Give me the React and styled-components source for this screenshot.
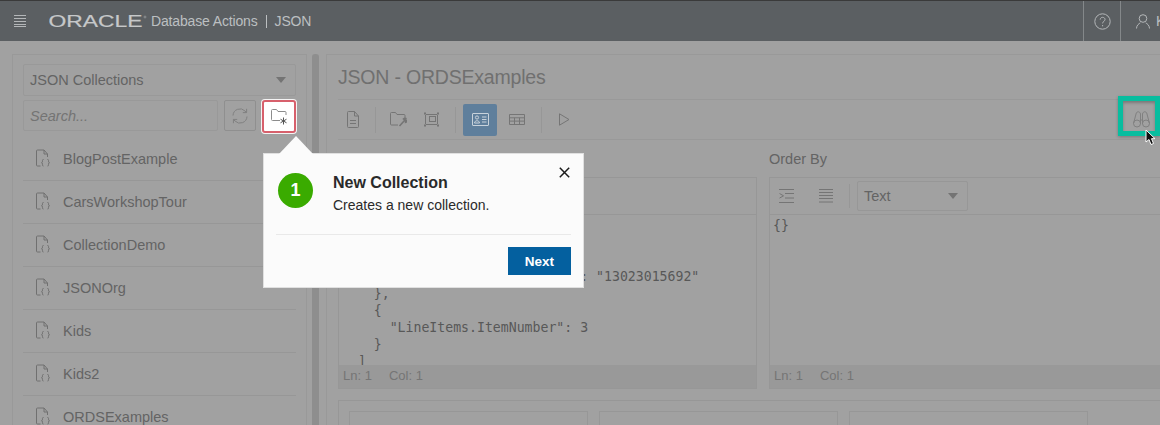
import React from "react";
import styled, { createGlobalStyle } from "styled-components";

const GlobalStyle = createGlobalStyle`
    html, body { margin: 0; padding: 0; background: #a1a1a1; }
    * { box-sizing: border-box; }
`;

const collections = ["BlogPostExample", "CarsWorkshopTour", "CollectionDemo", "JSONOrg", "Kids", "Kids2", "ORDSExamples"];

const codeLines = [
    "{",
    '  "$orderby": [',
    "    {",
    '      "LineItems.Part.UPCCode": "13023015692"',
    "    },",
    "    {",
    '      "LineItems.ItemNumber": 3',
    "    }",
    "  ]",
    "}",
];

const Svg = ({ size = 20, h, stroke = "#757575", children }) => (
    <svg width={size} height={h || size} viewBox={`0 0 ${size} ${h || size}`} fill="none" stroke={stroke} strokeWidth="1" style={{ flex: "none" }}>
        {children}
    </svg>
);

const HamburgerIcon = () => (
    <Svg size={12} stroke="#b4b7b9">
        <path d="M0 .5h12M0 3.5h12M0 6.5h12M0 9.5h12M0 11.5h12" />
    </Svg>
);

const HelpIcon = () => (
    <Svg size={17} stroke="#b4b7b9">
        <circle cx="8.5" cy="8.5" r="7.7" />
        <path d="M6.2 6.6c0-3 4.8-3 4.8-.1 0 1.8-2.4 1.9-2.4 3.9M8.6 12v1.3" />
    </Svg>
);

const UserIcon = () => (
    <Svg size={14} h={15} stroke="#b4b7b9">
        <circle cx="7" cy="4.5" r="3.8" />
        <path d="M.5 14.5c0-3.2 2.5-5 3.8-5.6M13.5 14.5c0-3.2-2.5-5-3.8-5.6" />
    </Svg>
);

const DocJsonIcon = () => (
    <Svg size={15} h={18} stroke="#707070">
        <path d="M4.5 17H1.5a1 1 0 0 1-1-1V2a1 1 0 0 1 1-1h6.500l3.500 4v3M8 1v4h3.500" />
        <path d="M7.500 10.500c-1.300 0-1 .8-1 1.700s-.2 1.300-1 1.500c.8.2 1 .6 1 1.500s-.3 1.800 1 1.800M11.500 10.500c1.300 0 1 .8 1 1.700s.2 1.300 1 1.500c-.8.2-1 .6-1 1.500s.3 1.800-1 1.800" />
    </Svg>
);

const RefreshIcon = () => (
    <Svg size={16} stroke="#808080">
        <path d="M1 7.5A7 7 0 0 1 13 3l1.5 1.5M15 8.5A7 7 0 0 1 3 13l-1.5-1.5" />
        <path d="M14.6.8v3.8h-3.8M1.4 15.2v-3.8h3.8" />
    </Svg>
);

const NewFolderIcon = () => (
    <Svg size={17} h={16} stroke="#8c8c8c">
        <path d="M9 11.5H1.5a1 1 0 0 1-1-1V1.5a1 1 0 0 1 1-1h4l1.5 2h7a1 1 0 0 1 1 1V6" />
        <path stroke="#555" d="M12.5 8.5v7M9.5 10.2l6 3.6M15.5 10.2l-6 3.6" />
    </Svg>
);

const FileIcon = () => (
    <Svg size={12} h={17}>
        <path d="M.5 1.5a1 1 0 0 1 1-1H7.5l4 4.5v10.5a1 1 0 0 1-1 1h-9a1 1 0 0 1-1-1zM7.5.5V5h4M3 9.5h6M3 12.5h6" />
    </Svg>
);

const FolderWrenchIcon = () => (
    <Svg size={17} h={15}>
        <path d="M8 13H1.5a1 1 0 0 1-1-1V1.5a1 1 0 0 1 1-1h4l1.5 2h7a1 1 0 0 1 1 1V6" />
        <path strokeWidth="1.6" d="M9.5 14l5-5.5M13 7.5c.6-1 1.6-1.3 2.7-1l-1 1.5 1 1 1.3-.8c.2 1.200-.8 2.300-2.200 2.200" />
    </Svg>
);

const SelectionIcon = () => (
    <Svg size={17} h={15}>
        <path d="M3 2.500h11M2.500 3v9M3 12.500h11M14.500 3v9" />
        <rect x="6.500" y="4.500" width="6" height="5" />
        <path strokeWidth="2" d="M1 1.500h2M14 1.500h2M1 13.500h2M14 13.500h2" />
    </Svg>
);

const CardIcon = () => (
    <Svg size={17} h={13} stroke="#c8d2db">
        <rect x=".5" y=".5" width="16" height="12" rx=".5" />
        <circle cx="5" cy="4.500" r="1.600" />
        <path d="M2.500 10c0-3 5-3 5 0zM10 4h4.500M10 6.500h4.500M10 9h4.500" />
    </Svg>
);

const TableIcon = () => (
    <Svg size={16} h={11}>
        <path d="M.5.5h15v10H.5zM.5 3.800h15M.5 7.100h15M5.500 3.800v6.700M10.500 3.800v6.700" />
    </Svg>
);

const PlayIcon = () => (
    <Svg size={11} h={13}>
        <path d="M.5.8v11.400L10 6.500z" />
    </Svg>
);

const BinocularsIcon = () => (
    <Svg size={17} h={17} stroke="#808080">
        <circle cx="4" cy="12.500" r="3.500" />
        <circle cx="13" cy="12.500" r="3.500" />
        <path d="M.5 12.500L3 3c.5-3 4-3 4.500 0v10M16.500 12.500L14 3c-.5-3-4-3-4.500 0v10M7.500 9h2" />
    </Svg>
);

const IndentIcon = () => (
    <Svg size={15} h={14}>
        <path d="M0 .5h15M6 4.500h9M6 9h9M0 13.500h15M.5 4.500l4 2.300-4 2.300" />
    </Svg>
);

const LinesIcon = () => (
    <Svg size={14} h={14}>
        <path d="M0 .5h14M0 3.500h14M0 6.500h14M0 9.500h14M0 13h14" />
    </Svg>
);

const CloseIcon = () => (
    <Svg size={11} stroke="#1b1b1b">
        <path strokeWidth="1.500" d="M.8.8l9.400 9.400M10.200.8L.8 10.200" />
    </Svg>
);

const CursorIcon = () => (
    <svg width="12" height="17" viewBox="0 0 12 17">
        <path d="M1 1v12l3-2.500 2 5 2.500-1-2-4.800H10z" fill="#111" stroke="#fff" strokeWidth="1" />
    </svg>
);

const JsonEditor = ({ label, lines }) => (
    <EditorColumn>
        <EditorLabel>{label}</EditorLabel>
        <EditorBox>
            <EditorToolbar>
                <EditorTool><IndentIcon /></EditorTool>
                <EditorTool><LinesIcon /></EditorTool>
                <ToolSeparator $height={24} />
                <ModeSelect>
                    Text
                    <Caret />
                </ModeSelect>
            </EditorToolbar>
            <Code>{lines.join("\n")}</Code>
            <EditorFooter>
                <span>Ln: 1</span>
                <span>Col: 1</span>
            </EditorFooter>
        </EditorBox>
    </EditorColumn>
);

const App = () => {
    return (
        <Page>
            <GlobalStyle />
            <Header>
                <MenuButton><HamburgerIcon /></MenuButton>
                <Logo>
                    <svg width="98" height="14" viewBox="0 0 98 14">
                        <text x="-0.500" y="13" textLength="94" lengthAdjust="spacingAndGlyphs" fontFamily="Liberation Sans" fontSize="16.500" fill="#c6c8c9" stroke="#c6c8c9" strokeWidth=".2">ORACLE</text>
                        <circle cx="96" cy="3" r="1" fill="none" stroke="#c6c8c9" strokeWidth=".4" />
                    </svg>
                </Logo>
                <AppTitle>Database Actions</AppTitle>
                <TitleBar />
                <AppTitle>JSON</AppTitle>
                <HeaderCell $width={37}><HelpIcon /></HeaderCell>
                <HeaderCell $width={40} $user>
                    <UserIcon />
                    <UserName>K</UserName>
                </HeaderCell>
            </Header>

            <Content>
                <Sidebar>
                    <SelectBox>
                        JSON Collections
                        <Caret />
                    </SelectBox>
                    <SearchRow>
                        <SearchInput>Search...</SearchInput>
                        <SquareButton><RefreshIcon /></SquareButton>
                        <NewButton><NewFolderIcon /></NewButton>
                    </SearchRow>
                    <CollectionList>
                        {collections.map((name) => (
                            <CollectionRow key={name}>
                                <DocJsonIcon />
                                {name}
                            </CollectionRow>
                        ))}
                    </CollectionList>
                </Sidebar>

                <Splitter />

                <Main>
                    <Title>JSON - ORDSExamples</Title>
                    <Toolbar>
                        <ToolButton $width={30}><FileIcon /></ToolButton>
                        <ToolSeparator $height={26} $gap={7} />
                        <ToolButton $width={31}><FolderWrenchIcon /></ToolButton>
                        <ToolButton $width={34}><SelectionIcon /></ToolButton>
                        <ToolSeparator $height={26} $gap={7} />
                        <ToolButton $width={34} $active><CardIcon /></ToolButton>
                        <ToolButton $width={40}><TableIcon /></ToolButton>
                        <ToolSeparator $height={26} $gap={4} />
                        <ToolButton $width={36}><PlayIcon /></ToolButton>
                        <FindButton>
                            <BinocularsIcon />
                        </FindButton>
                    </Toolbar>
                    <Editors>
                        <JsonEditor label="Filter" lines={codeLines} />
                        <JsonEditor label="Order By" lines={["{}"]} />
                    </Editors>
                    <LowerPanel>
                        <LowerBox />
                        <LowerBox />
                        <LowerBox />
                    </LowerPanel>
                </Main>
            </Content>

            <Highlight />
            <Pointer><CursorIcon /></Pointer>

            <Popover>
                <PopoverArrow />
                <PopoverBody>
                    <StepBadge>1</StepBadge>
                    <PopoverText>
                        <PopoverTitle>New Collection</PopoverTitle>
                        <PopoverDescription>Creates a new collection.</PopoverDescription>
                    </PopoverText>
                    <CloseButton><CloseIcon /></CloseButton>
                </PopoverBody>
                <PopoverFooter>
                    <NextButton>Next</NextButton>
                </PopoverFooter>
            </Popover>
        </Page>
    );
};

export default App;

const Page = styled.div`
    position: relative;
    width: 1160px;
    height: 425px;
    overflow: hidden;
    background: #a1a1a1;
    color: #646464;
    font-family: "Liberation Sans", Arial, sans-serif;
    font-size: 14.5px;
`;

const Header = styled.header`
    display: flex;
    align-items: center;
    height: 41px;
    background: #5b5f62;
    border-top: 1px solid #3a3a3a;
    color: #bcbfc1;
`;

const MenuButton = styled.div`
    display: flex;
    width: 49px;
    padding-left: 14px;
`;

const Logo = styled.div`
    display: flex;
    width: 102px;
`;

const AppTitle = styled.span`
    font-size: 14px;
    letter-spacing: -0.15px;
`;

const TitleBar = styled.i`
    width: 1px;
    height: 13px;
    margin: 0 8px;
    background: #bcbfc1;
`;

const HeaderCell = styled.div`
    display: flex;
    align-items: center;
    justify-content: ${(p) => (p.$user ? "flex-start" : "center")};
    flex: none;
    width: ${(p) => p.$width}px;
    height: 40px;
    padding-left: ${(p) => (p.$user ? "15px" : "0")};
    gap: 6px;
    border-left: 1px solid #84888a;

    &:nth-last-child(2) {
        margin-left: auto;
    }
`;

const UserName = styled.span`
    font-size: 14px;
`;

const Content = styled.div`
    display: flex;
    height: 384px;
    padding: 13px 0 0 12px;
`;

const Sidebar = styled.aside`
    flex: none;
    width: 295px;
    padding: 9px 10px 0;
    border: 1px solid #999;
    border-bottom: 0;
`;

const Caret = styled.i`
    width: 0;
    height: 0;
    margin-left: auto;
    border-style: solid;
    border-width: 6px 5px 0;
    border-color: #747474 transparent transparent;
`;

const SelectBox = styled.div`
    display: flex;
    align-items: center;
    height: 32px;
    padding: 0 9px 0 6px;
    border: 1px solid #999;
    border-radius: 2px;
    font-size: 14.5px;
`;

const SearchRow = styled.div`
    display: flex;
    align-items: flex-start;
    gap: 6px;
    margin-top: 4px;
`;

const SearchInput = styled.div`
    display: flex;
    align-items: center;
    width: 195px;
    height: 31px;
    padding-left: 6px;
    border: 1px solid #999;
    border-radius: 2px;
    font-style: italic;
    color: #747474;
`;

const SquareButton = styled.div`
    display: flex;
    align-items: center;
    justify-content: center;
    width: 32px;
    height: 31px;
    border: 1px solid #8f8f8f;
    border-radius: 2px;
`;

const NewButton = styled.div`
    display: flex;
    align-items: center;
    justify-content: center;
    width: 34px;
    height: 33px;
    background: #fff;
    border: 2px solid #d7606c;
    border-radius: 3px;
    box-shadow: 0 0 0 1px #f4f4f4;
`;

const CollectionList = styled.div`
    margin-top: 5px;
`;

const CollectionRow = styled.div`
    display: flex;
    align-items: center;
    gap: 12px;
    height: 43px;
    padding-left: 13px;
    border-bottom: 1px solid #979797;
    font-size: 14.5px;

    svg {
        margin-top: -3px;
    }
`;

const Splitter = styled.div`
    flex: none;
    width: 7px;
    margin-left: 5px;
    background: #8e8e8e;
    border-radius: 3px 3px 0 0;
`;

const Main = styled.main`
    flex: 1;
    min-width: 0;
    margin-left: 7px;
    padding-left: 11px;
    border: 1px solid #999;
    border-right: 0;
    border-bottom: 0;
`;

const Title = styled.h1`
    display: flex;
    align-items: center;
    height: 44px;
    margin: 0;
    font-size: 19.500px;
    font-weight: 400;
    letter-spacing: -0.2px;
    color: #707070;
`;

const Toolbar = styled.div`
    display: flex;
    align-items: center;
    height: 41px;
    border-top: 1px solid #999;
    border-bottom: 1px solid #999;
`;

const ToolButton = styled.div`
    display: flex;
    align-items: center;
    justify-content: center;
    flex: none;
    width: ${(p) => p.$width}px;
    height: 32px;
    border-radius: 2px;
    background: ${(p) => (p.$active ? "#5f7f9c" : "transparent")};
`;

const ToolSeparator = styled.i`
    flex: none;
    width: 1px;
    height: ${(p) => p.$height}px;
    margin: 0 ${(p) => p.$gap || 0}px;
    background: #979797;
`;

const FindButton = styled.div`
    display: flex;
    margin-left: auto;
    margin-right: 10px;
`;

const Editors = styled.div`
    display: grid;
    grid-template-columns: 419px 419px;
    gap: 12px;
`;

const EditorColumn = styled.section`
    display: flex;
    flex-direction: column;
`;

const EditorLabel = styled.label`
    display: flex;
    align-items: center;
    height: 37px;
    font-size: 14.500px;
`;

const EditorBox = styled.div`
    height: 212px;
    border: 1px solid #979797;
`;

const EditorToolbar = styled.div`
    display: flex;
    align-items: center;
    height: 37px;
    padding-left: 9px;
    border-bottom: 1px solid #979797;
`;

const EditorTool = styled.div`
    display: flex;
    justify-content: center;
    width: 15px;
    margin-right: 24px;

    & + & {
        margin-right: 16px;
    }
`;

const ModeSelect = styled.div`
    display: flex;
    align-items: center;
    width: 111px;
    height: 30px;
    margin-left: 7px;
    padding: 0 9px 0 6px;
    border: 1px solid #979797;
    border-radius: 2px;
    font-size: 14.500px;
`;

const Code = styled.pre`
    height: 150px;
    margin: 0;
    padding: 2px 0 0 3px;
    overflow: hidden;
    font-family: "DejaVu Sans Mono", monospace;
    font-size: 13.200px;
    line-height: 17px;
    color: #585858;
`;

const EditorFooter = styled.div`
    display: flex;
    align-items: center;
    gap: 17px;
    height: 23px;
    padding: 0 0 2px 4px;
    background: #999;
    font-size: 13px;
    color: #757575;
`;

const LowerPanel = styled.div`
    display: flex;
    gap: 11px;
    height: 60px;
    margin-top: 11px;
    padding: 10px 10px 0;
    border: 1px solid #979797;
    border-right: 0;
`;

const LowerBox = styled.div`
    width: 239px;
    height: 60px;
    border: 1px solid #979797;
`;

const Highlight = styled.div`
    position: absolute;
    left: 1118px;
    top: 96px;
    width: 42px;
    height: 40px;
    border: 5px solid #08bd9f;
    box-shadow: inset 0 2px 3px rgba(0, 0, 0, 0.25), 0 1px 3px rgba(0, 0, 0, 0.25);
`;

const Pointer = styled.div`
    position: absolute;
    left: 1145px;
    top: 129px;
    display: flex;
`;

const Popover = styled.div`
    position: absolute;
    left: 263px;
    top: 153px;
    width: 321px;
    height: 135px;
    background: #fbfbfb;
    border: 1px solid #e0e0e0;
    color: #2a2a2a;
`;

const PopoverArrow = styled.i`
    position: absolute;
    left: 15px;
    top: -18px;
    width: 0;
    height: 0;
    border-style: solid;
    border-width: 0 17px 18px;
    border-color: transparent transparent #fbfbfb;
`;

const PopoverBody = styled.div`
    position: relative;
    display: flex;
    align-items: flex-start;
    height: 81px;
    margin: 0 12px;
    padding: 19px 0 0 2px;
    border-bottom: 1px solid #e9e9e9;
`;

const StepBadge = styled.div`
    display: flex;
    align-items: center;
    justify-content: center;
    flex: none;
    width: 35px;
    height: 35px;
    border-radius: 50%;
    background: #3aab00;
    color: #fff;
    font-size: 18px;
    font-weight: 700;
`;

const PopoverText = styled.div`
    margin-left: 20px;
`;

const PopoverTitle = styled.div`
    font-size: 16px;
    font-weight: 700;
    line-height: 20px;
`;

const PopoverDescription = styled.div`
    margin-top: 3px;
    font-size: 14px;
    line-height: 18px;
`;

const CloseButton = styled.div`
    position: absolute;
    right: 1px;
    top: 13px;
    display: flex;
`;

const PopoverFooter = styled.div`
    display: flex;
    justify-content: flex-end;
    padding: 12px 12px 0;
`;

const NextButton = styled.button`
    width: 63px;
    height: 28px;
    padding: 0;
    border: 0;
    background: #04609f;
    color: #fff;
    font-family: inherit;
    font-size: 13.500px;
    font-weight: 700;
`;
